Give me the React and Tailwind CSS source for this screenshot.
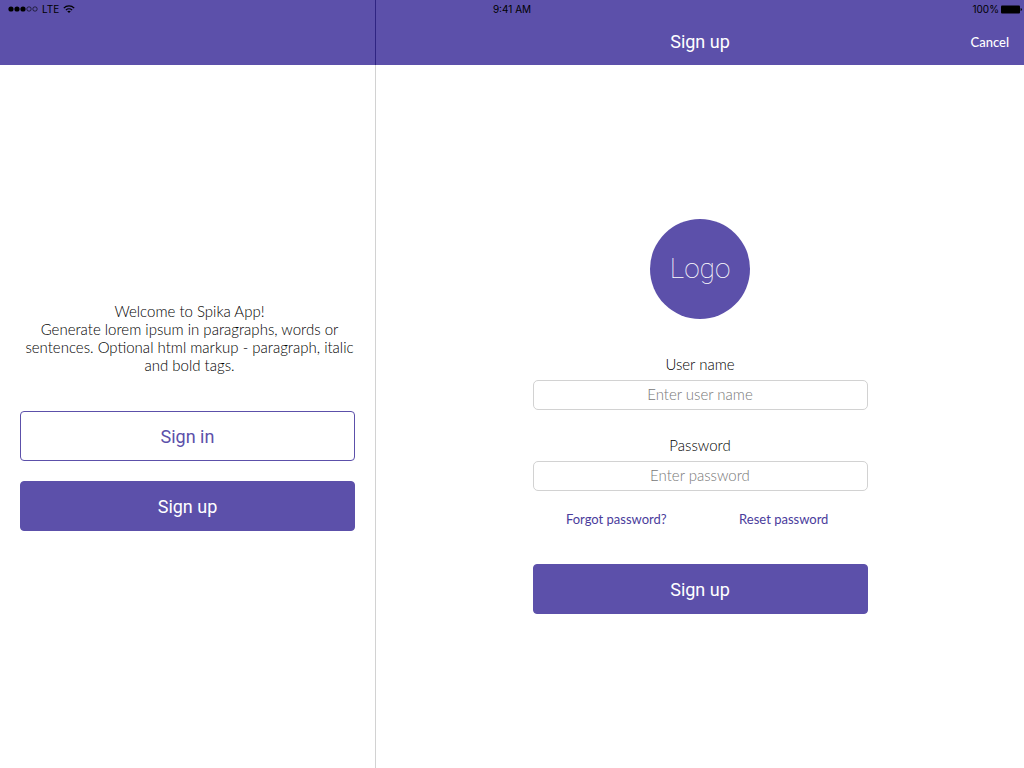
import React from "react";

function SignalDots() {
  return (
    <svg className="h-2 w-[30px]" viewBox="0 0 30 8" aria-hidden="true">
      <circle cx="3" cy="4" r="2.6" fill="#000" />
      <circle cx="9" cy="4" r="2.6" fill="#000" />
      <circle cx="15" cy="4" r="2.6" fill="#000" />
      <circle cx="21" cy="4" r="2.2" fill="none" stroke="#000" strokeWidth="0.6" />
      <circle cx="27" cy="4" r="2.2" fill="none" stroke="#000" strokeWidth="0.6" />
    </svg>
  );
}

function WifiIcon() {
  return (
    <svg className="h-2 w-3" viewBox="0 0 12 8" fill="none" stroke="#000" strokeWidth="1.3" aria-hidden="true">
      <path d="M0.8 3.1C3.7 0.2 8.3 0.2 11.2 3.1" />
      <path d="M2.9 5.1C4.6 3.4 7.4 3.4 9.1 5.1" />
      <path d="M6 8L4.2 6.3C5.2 5.4 6.8 5.4 7.8 6.3Z" fill="#000" stroke="none" />
    </svg>
  );
}

function BatteryIcon() {
  return (
    <svg className="h-[9px] w-[21px]" viewBox="0 0 21 9" aria-hidden="true">
      <rect x="0" y="0.5" width="19" height="8" rx="1" fill="#000" />
      <path d="M19.6 3Q21 3.4 21 4.5T19.6 6Z" fill="#000" />
    </svg>
  );
}

function StatusBar() {
  return (
    <div className="absolute inset-x-0 top-0 grid h-[18px] grid-cols-3 items-center px-0.5 font-['Inter','Liberation_Sans',sans-serif] text-[10px] leading-[18px] text-black">
      <div className="flex items-center gap-1 pl-1.5">
        <SignalDots />
        <span>LTE</span>
        <WifiIcon />
      </div>
      <div className="text-center">9:41 AM</div>
      <div className="flex items-center justify-end gap-0.5">
        <span>100%</span>
        <BatteryIcon />
      </div>
    </div>
  );
}

const buttonBase =
  "h-[50px] w-full rounded border border-[#5c50aa] pt-0.5 font-['Roboto',sans-serif] text-lg";

function PrimaryButton({ children, type = "button" }) {
  return (
    <button type={type} className={`${buttonBase} bg-[#5c50aa] text-white`}>
      {children}
    </button>
  );
}

function Field({ id, label, type, placeholder }) {
  return (
    <div className="flex flex-col gap-1.5">
      <label htmlFor={id} className="text-center text-[15px] leading-5 font-light text-black">
        {label}
      </label>
      <input
        id={id}
        type={type}
        placeholder={placeholder}
        className="h-[30px] w-full rounded-[5px] border border-[#d2d2d2] bg-white pb-0.5 text-center text-[15px] font-light text-black placeholder:text-[#777777]"
      />
    </div>
  );
}

export default function App() {
  return (
    <div className="relative flex min-h-screen bg-white font-['Lato',sans-serif]">
      <aside className="flex w-[376px] shrink-0 flex-col">
        <div className="h-[65px] border-r border-[#2f2482] bg-[#5c50aa]" />
        <div className="flex flex-1 flex-col justify-center border-r border-[#d2d2d2] px-5">
          <p className="pl-1 text-center text-[15px] leading-[18px] font-light text-black">
            Welcome to Spika App!
            <br />
            Generate lorem ipsum in paragraphs, words or sentences. Optional html markup - paragraph, italic and bold
            tags.
          </p>
          <div className="mt-[37px] flex flex-col gap-5">
            <button type="button" className={`${buttonBase} bg-white text-[#5c50aa]`}>
              Sign in
            </button>
            <PrimaryButton>Sign up</PrimaryButton>
          </div>
        </div>
      </aside>

      <main className="flex min-w-0 flex-1 flex-col">
        <header className="grid h-[65px] grid-cols-[1fr_auto_1fr] items-center bg-[#5c50aa] px-[15px] pt-[18px] text-white">
          <h1 className="col-start-2 font-['Roboto',sans-serif] text-lg">Sign up</h1>
          <button type="button" className="justify-self-end text-[13px] leading-6 font-medium">
            Cancel
          </button>
        </header>
        <div className="flex flex-1 flex-col items-center justify-center px-5">
          <div className="flex size-[100px] items-center justify-center rounded-full bg-[#5c50aa] font-['Roboto',sans-serif] text-[28px] leading-8 font-thin text-white">
            Logo
          </div>
          <form className="mt-[35px] flex w-full max-w-[335px] flex-col" onSubmit={(e) => e.preventDefault()}>
            <div className="flex flex-col gap-[25px]">
              <Field id="username" label="User name" type="text" placeholder="Enter user name" />
              <Field id="password" label="Password" type="password" placeholder="Enter password" />
            </div>
            <div className="mt-[18px] mb-[35px] grid grid-cols-2 text-center text-[13px] leading-5 text-[#4a3c9c]">
              <a href="#forgot">Forgot password?</a>
              <a href="#reset">Reset password</a>
            </div>
            <PrimaryButton type="submit">Sign up</PrimaryButton>
          </form>
        </div>
      </main>

      <StatusBar />
    </div>
  );
}
